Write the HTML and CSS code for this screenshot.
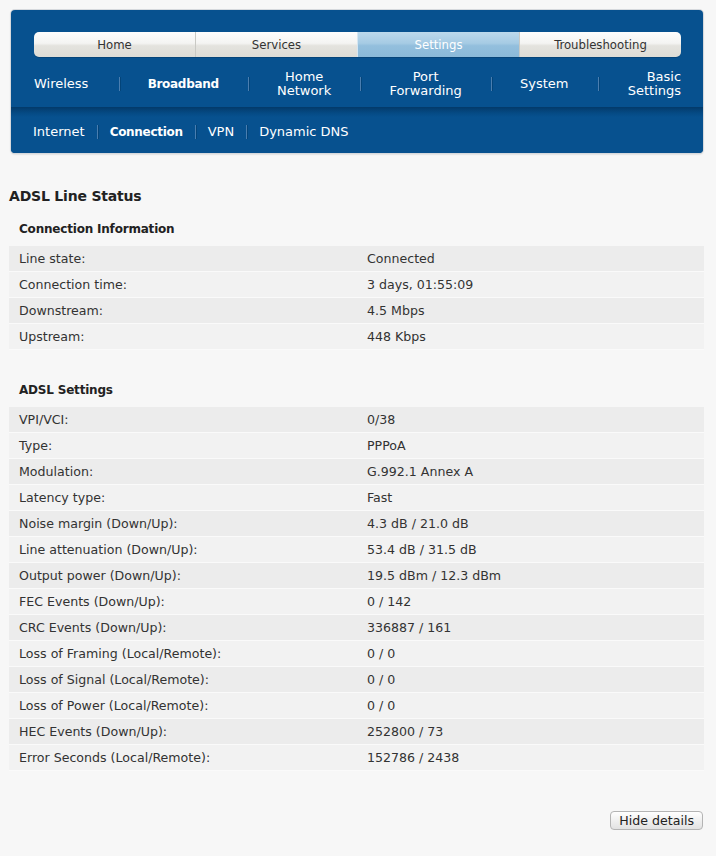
FILE: index.html
```html
<!DOCTYPE html>
<html lang="en">
<head>
    <meta charset="UTF-8">
    <meta name="viewport" content="width=device-width, initial-scale=1.0">
    <title>ADSL Line Status</title>
    <link rel="stylesheet" href="styles.css">
</head>
<body>
    <div class="header">
        <div class="header-top">
            <ul class="tabs">
                <li>Home</li>
                <li>Services</li>
                <li class="current">Settings</li>
                <li>Troubleshooting</li>
            </ul>
            <ul class="menu">
                <li>Wireless</li>
                <li class="active">Broadband</li>
                <li>Home<br>Network</li>
                <li>Port<br>Forwarding</li>
                <li>System</li>
                <li>Basic<br>Settings</li>
            </ul>
        </div>
        <ul class="submenu">
            <li>Internet</li>
            <li class="active">Connection</li>
            <li>VPN</li>
            <li>Dynamic DNS</li>
        </ul>
    </div>

    <div class="content">
        <h1>ADSL Line Status</h1>

        <h2>Connection Information</h2>
        <table class="status">
            <tr><td>Line state:</td><td>Connected</td></tr>
            <tr><td>Connection time:</td><td>3 days, 01:55:09</td></tr>
            <tr><td>Downstream:</td><td>4.5 Mbps</td></tr>
            <tr><td>Upstream:</td><td>448 Kbps</td></tr>
        </table>

        <h2 class="second">ADSL Settings</h2>
        <table class="status">
            <tr><td>VPI/VCI:</td><td>0/38</td></tr>
            <tr><td>Type:</td><td>PPPoA</td></tr>
            <tr><td>Modulation:</td><td>G.992.1 Annex A</td></tr>
            <tr><td>Latency type:</td><td>Fast</td></tr>
            <tr><td>Noise margin (Down/Up):</td><td>4.3 dB / 21.0 dB</td></tr>
            <tr><td>Line attenuation (Down/Up):</td><td>53.4 dB / 31.5 dB</td></tr>
            <tr><td>Output power (Down/Up):</td><td>19.5 dBm / 12.3 dBm</td></tr>
            <tr><td>FEC Events (Down/Up):</td><td>0 / 142</td></tr>
            <tr><td>CRC Events (Down/Up):</td><td>336887 / 161</td></tr>
            <tr><td>Loss of Framing (Local/Remote):</td><td>0 / 0</td></tr>
            <tr><td>Loss of Signal (Local/Remote):</td><td>0 / 0</td></tr>
            <tr><td>Loss of Power (Local/Remote):</td><td>0 / 0</td></tr>
            <tr><td>HEC Events (Down/Up):</td><td>252800 / 73</td></tr>
            <tr><td>Error Seconds (Local/Remote):</td><td>152786 / 2438</td></tr>
        </table>

        <div class="actions">
            <button>Hide details</button>
        </div>
    </div>
</body>
</html>
```

FILE: styles.css
```css
body {
    margin: 0;
    background-color: #f7f7f7;
    font-family: "DejaVu Sans", Verdana, sans-serif;
    font-size: 12.6px;
    color: #333;
}

ul {
    list-style: none;
    margin: 0;
    padding: 0;
}

/* blue navigation box */
.header {
    margin: 10px 13px 0 11px;
    background-color: #07518f;
    border-radius: 4px;
    box-shadow: 0 0 0 1px #d6d9dd, 0 1px 2px rgba(0, 0, 0, 0.25);
    color: #fff;
}

.header-top {
    padding: 22px 22px 0 23px;
    height: 75px;
}

.tabs {
    display: flex;
    height: 25px;
    border-radius: 5px;
    overflow: hidden;
    box-shadow: 0 1px 0 rgba(0, 0, 0, 0.15);
}

.tabs li {
    flex: 1;
    text-align: center;
    line-height: 25px;
    font-family: "DejaVu Sans Condensed", Tahoma, sans-serif;
    font-size: 13px;
    color: #333;
    background: linear-gradient(#fdfdfd, #f4f4f2 45%, #e4e3de 55%, #dddcd6);
    border-left: 1px solid #c9c9c4;
}

.tabs li:first-child {
    border-left: none;
}

.tabs li.current {
    color: #fff;
    background: linear-gradient(#bcd9ec, #a6cbe4 45%, #93bfdd 55%, #8bb9d9);
    border-left-color: #d6e6f1;
}

.menu {
    display: flex;
    align-items: center;
    box-sizing: border-box;
    height: 50px;
    padding-top: 4px;
}

.menu li {
    position: relative;
    flex: 1 1 auto;
    text-align: center;
    line-height: 14px;
    font-size: 13px;
    padding: 0 28px;
}

.menu li:first-child {
    text-align: left;
    padding-left: 0;
}

.menu li:last-child {
    text-align: right;
    padding-right: 0;
}

/* short divider lines between menu items */
.menu li + li::before,
.submenu li + li::before {
    content: "";
    position: absolute;
    left: 0;
    top: 50%;
    width: 1px;
    height: 14px;
    margin-top: -7px;
    background-color: #4a7eb0;
    box-shadow: 1px 0 0 #034479;
}

.menu li.active,
.submenu li.active {
    font-weight: bold;
    font-size: 12px;
    letter-spacing: -0.3px;
}

.submenu {
    display: flex;
    align-items: center;
    box-sizing: border-box;
    height: 46px;
    padding: 4px 0 0 22px;
    background: linear-gradient(#033a6a, #054a84 6px, #07518f 10px);
    border-radius: 0 0 4px 4px;
    font-size: 13px;
}

.submenu li {
    position: relative;
    padding: 0 12px 0 13px;
    line-height: 16px;
}

.submenu li:first-child {
    padding-left: 0;
}

/* status tables */
.content {
    margin: 0 12px 0 9px;
}

h1 {
    margin: 34px 0 0;
    font-size: 14px;
    line-height: 18px;
    letter-spacing: -0.2px;
    color: #222;
}

h2 {
    box-sizing: border-box;
    margin: 16px 0 0 10px;
    height: 25px;
    font-size: 12px;
    line-height: 16px;
    letter-spacing: -0.2px;
    color: #222;
}

h2.second {
    margin-top: 32px;
}

.status {
    width: 100%;
    border-collapse: collapse;
}

.status td {
    height: 25px;
    padding: 0 10px;
    border-bottom: 1px solid #fafafa;
    background-color: #f2f2f2;
}

.status tr:nth-child(odd) td {
    background-color: #ececec;
}

.status td:first-child {
    width: 328px;
}

.actions {
    display: flex;
    justify-content: flex-end;
    margin: 40px 1px 0 0;
}

button {
    font-family: "DejaVu Sans", Verdana, sans-serif;
    font-size: 12.6px;
    color: #222;
    height: 19px;
    padding: 0 8px;
    border: 1px solid #b4b4b4;
    border-radius: 4px;
    background: linear-gradient(#ffffff, #f0f0f0 50%, #e2e2e2);
    cursor: pointer;
}
```
